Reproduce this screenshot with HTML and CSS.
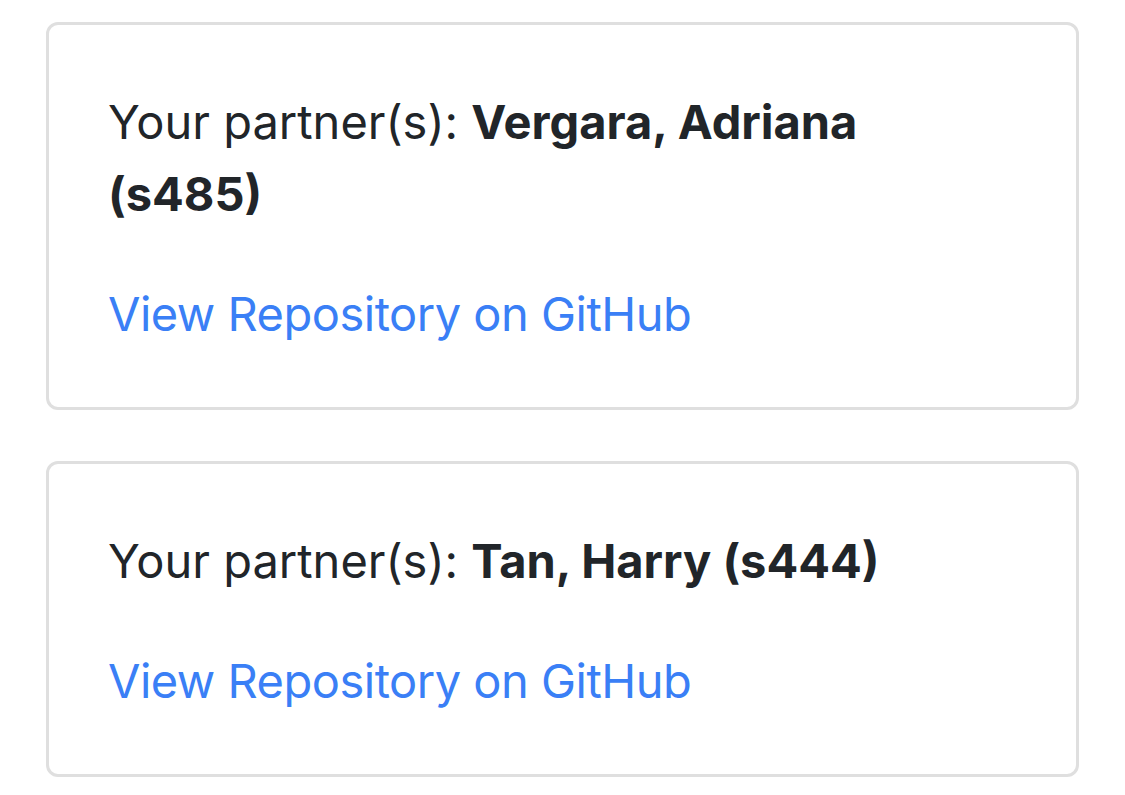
FILE: index.html
```html
<!DOCTYPE html>
<html lang="en">
<head>
  <meta charset="UTF-8">
  <meta name="viewport" content="width=device-width, initial-scale=1.0">
  <link rel="stylesheet" href="styles.css">
</head>
<body>
  <div class="partner-list">
    <div class="card">
      <p class="partner">Your partner(s): <strong>Vergara, Adriana (s485)</strong></p>
      <a class="repo-link" href="#">View Repository on GitHub</a>
    </div>
    <div class="card">
      <p class="partner">Your partner(s): <strong>Tan, Harry (s444)</strong></p>
      <a class="repo-link" href="#">View Repository on GitHub</a>
    </div>
  </div>
</body>
</html>
```

FILE: styles.css
```css
body {
  margin: 0;
  background-color: #ffffff;
  font-family: Inter, "Noto Sans", sans-serif;
  color: #212529;
}
.partner-list {
  padding: 22px 46px;
  display: flex;
  flex-direction: column;
  gap: 51px;
}
.card {
  border: 3px solid #dfdfdf;
  border-radius: 12px;
  padding: 61px 61px 57px 59px;
  font-size: 47px;
  line-height: 72px;
}
.partner {
  margin: 0 0 48px;
}
.partner strong {
  font-weight: 700;
}
.repo-link {
  display: block;
  color: #3a7ff6;
  text-decoration: none;
  letter-spacing: -0.5px;
}
```
